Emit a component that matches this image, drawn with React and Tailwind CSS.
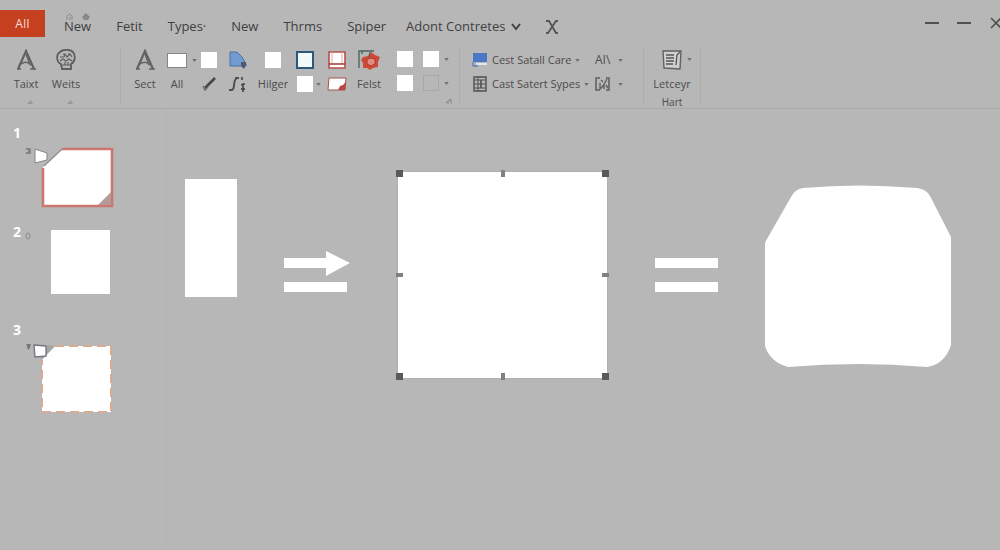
import React, { useState } from 'react';

const tabs = ['New', 'Fetit', 'Types·', 'New', 'Thrms', 'Spiper'];

const Caret = ({ className = '' }) => (
  <svg viewBox="0 0 6 4" className={`w-[5px] h-[3px] text-[#707070] ${className}`} aria-hidden="true">
    <path d="M0 0h6L3 4z" fill="currentColor" />
  </svg>
);

const LetterIcon = () => (
  <svg viewBox="0 0 20 22" className="w-5 h-[22px]" fill="none" stroke="#626262" aria-hidden="true">
    <path d="M2 20L10 2l8 18" strokeWidth="2.2" />
    <path d="M5 15c4-3 7-2 10 1M10 5l4 11M1 20h4M14 20l6 0" strokeWidth="1.4" />
  </svg>
);

const StampIcon = () => (
  <svg viewBox="0 0 20 22" className="w-5 h-[22px]" fill="none" stroke="#5e5e5e" aria-hidden="true">
    <path d="M5 15C0 13 0 5 4 3c3-3 10-3 13 0 3 4 2 10-2 12v5H6z" strokeWidth="1.8" />
    <path d="M4 8h4l1-3 2 3 3-3 2 3M4 12l3-2 3 2 3-2 3 2M6 16h8M9 13v3M12 13v3M7 5l2 1M12 5h2" strokeWidth="1.2" />
  </svg>
);

const Swatch = ({ label, className = 'bg-white' }) => (
  <button aria-label={label} className={`w-4 h-4 ${className}`} />
);

// One ribbon column: a tool on top, a second tool or a label below it
const Column = ({ top, bottom, className = 'w-8 items-center', marker = false }) => (
  <div className={`relative flex flex-col shrink-0 ${className}`}>
    <div className="h-6 flex items-center">{top}</div>
    <div className="h-6 flex items-center">{bottom}</div>
    {marker && (
      <svg viewBox="0 0 6 4" className="mt-1 ml-2 w-[6px] h-1" aria-hidden="true">
        <path d="M0 4l4-4 2 4z" fill="#989898" />
      </svg>
    )}
  </div>
);

const Divider = () => <div className="w-px h-14 shrink-0 bg-[#acacac]" />;

const Ribbon = () => (
  <div className="h-16 pt-[3px] flex items-start text-[11px] leading-4 font-medium text-[#4c4c4c] border-b border-[#a9a9a9] whitespace-nowrap">
    {/* Text */}
    <div className="w-[120px] shrink-0 pl-[6px] flex">
      <Column marker className="w-10 items-center" top={<button aria-label="Text tool"><LetterIcon /></button>} bottom="Taixt" />
      <Column marker className="w-10 items-center" top={<button aria-label="Stamp tool"><StampIcon /></button>} bottom="Weits" />
    </div>
    <Divider />

    {/* Shapes */}
    <div className="w-[338px] shrink-0 pl-2 flex">
      <Column top={<button aria-label="Select"><LetterIcon /></button>} bottom="Sect" />
      <Column
        top={
          <>
            <button aria-label="Rectangle" className="w-5 h-[15px] bg-white border border-[#858585]" />
            <Caret className="absolute -right-1" />
          </>
        }
        bottom="All"
      />
      <Column
        top={<Swatch label="Square" />}
        bottom={
          <button aria-label="Pen">
            <svg viewBox="0 0 16 16" className="w-4 h-4" fill="none" aria-hidden="true">
              <path d="M4 12L14 2" stroke="#484848" strokeWidth="2.6" />
              <path d="M2 10l2 4 3-3" stroke="#6a6a6a" strokeWidth="1.4" />
            </svg>
          </button>
        }
      />
      <Column
        className="w-8 items-start pl-1"
        top={
          <button aria-label="Fill shape">
            <svg viewBox="0 0 18 18" className="w-[18px] h-[18px]" aria-hidden="true">
              <path d="M1 1h7l5 5 4 7v2H1z" fill="#6f9bd0" stroke="#4c719e" />
              <path d="M12 11h5v3l-2 4-3-3z" fill="#4b5b70" />
            </svg>
          </button>
        }
        bottom={
          <button aria-label="Curve">
            <svg viewBox="0 0 18 18" className="w-[18px] h-[18px]" fill="none" stroke="#505050" aria-hidden="true">
              <path d="M0 15h3c4-2 0-9 5-12" strokeWidth="2" />
              <path d="M6 3h4M13 2v3M14 8v9M12 10l4-1M12 14h4" strokeWidth="1.8" />
            </svg>
          </button>
        }
      />
      <Column top={<Swatch label="Light fill" />} bottom="Hilger" />
      <Column
        top={<button aria-label="Outline" className="w-[18px] h-[18px] bg-[#f2f9fd] border-2 border-[#2d587c]" />}
        bottom={
          <>
            <Swatch label="Plain" />
            <Caret className="absolute right-0" />
          </>
        }
      />
      <Column
        top={
          <button aria-label="Page">
            <svg viewBox="0 0 18 18" className="w-[18px] h-[18px]" aria-hidden="true">
              <path d="M1 1h16v16H1z" fill="#fff" stroke="#b8504b" strokeWidth="1.6" />
              <path d="M4 1v12M14 1v12" fill="none" stroke="#dfaaa6" />
              <path d="M1 13h16" stroke="#a8433e" strokeWidth="1.6" />
            </svg>
          </button>
        }
        bottom={
          <button aria-label="Folded page">
            <svg viewBox="0 0 20 14" className="w-5 h-[14px]" aria-hidden="true">
              <path d="M2 1h17l-1 12H1z" fill="#fff" stroke="#a6534e" />
              <path d="M19 4c-3 5-3 4-6 5l-2 4h7z" fill="#b9463f" />
            </svg>
          </button>
        }
      />
      <Column
        top={
          <button aria-label="Flower">
            <svg viewBox="0 0 22 22" className="w-[22px] h-[22px]" aria-hidden="true">
              <path d="M1 19V2h15M1 2h3v3" fill="none" stroke="#4c6662" strokeWidth="1.4" />
              <path d="M5 8l5-1 3-4 4 3 5 2-2 5v5l-5 1-3 2-3-2H5v-5l-2-3z" fill="#cf4a38" />
              <path d="M9 10l4-1 4 1v5l-4 2-4-2z" fill="#df8f82" stroke="#a9372c" />
              <path d="M11 8l1-5" stroke="#4c5a58" />
            </svg>
          </button>
        }
        bottom="Felst"
      />
      <div className="relative ml-3 w-[60px] h-12 flex items-start">
        <div className="grid grid-cols-2 gap-x-[10px] gap-y-2 pt-[3px]">
          <Swatch label="Style 1" />
          <Swatch label="Style 2" />
          <Swatch label="Style 3" />
          <Swatch label="Style 4" className="border border-[#a8a8a8]" />
        </div>
        <Caret className="absolute right-2 top-[10px]" />
        <Caret className="absolute right-2 top-[34px]" />
        <svg viewBox="0 0 8 8" className="absolute right-1 top-[49px] w-2 h-2" fill="none" stroke="#858585" aria-hidden="true">
          <path d="M1 6l4-4M3 7V4l3-2v4h1" />
        </svg>
      </div>
    </div>
    <Divider />

    {/* Cells */}
    <div className="w-[183px] shrink-0 pl-3 flex">
      <Column
        className="w-[123px]"
        top={
          <button className="flex items-center gap-1">
            <svg viewBox="0 0 16 14" className="w-4 h-[14px]" aria-hidden="true">
              <path d="M1 0h14v9H1z" fill="#4a78c4" />
              <path d="M1 10h14v2H1z" fill="#dfe6f2" />
              <path d="M1 9v4h5M2 11h2" fill="none" stroke="#4567a0" />
            </svg>
            <span>Cest Satall Care</span>
            <Caret />
          </button>
        }
        bottom={
          <button className="flex items-center gap-1">
            <svg viewBox="0 0 16 16" className="w-4 h-4" fill="none" stroke="#505050" aria-hidden="true">
              <path d="M2 1h12v14H2z" strokeWidth="1.4" />
              <path d="M6 1v14M2 4h12M2 8h12M2 12h12" />
              <path d="M9 4v8" strokeWidth="1.6" />
            </svg>
            <span>Cast Satert Sypes</span>
            <Caret />
          </button>
        }
      />
      <Column
        className="w-8"
        top={<button className="w-7 flex items-center justify-between text-xs">AI\ <Caret /></button>}
        bottom={
          <button aria-label="Chart" className="w-7 flex items-center justify-between">
            <svg viewBox="0 0 16 16" className="w-4 h-4" fill="none" stroke="#616161" aria-hidden="true">
              <path d="M5 2H1v12h4M11 14h3V2h-3" strokeWidth="1.6" />
              <path d="M5 7v6l3-3 4-7M9 8v5M6 4l2 2M11 9l2 3" strokeWidth="1.4" />
            </svg>
            <Caret />
          </button>
        }
      />
    </div>
    <Divider />

    <div className="relative w-14 shrink-0 flex flex-col items-center">
      <button className="flex flex-col items-center">
        <span className="h-6 flex items-center">
          <svg viewBox="0 0 20 20" className="w-5 h-5" aria-hidden="true">
            <path d="M1 1h18l-1 18-16-1z" fill="#d0d0d0" stroke="#606060" strokeWidth="1.4" />
            <path d="M4 5h8M4 8h8M4 11h8M4 14h7M14 15l1-10 3-3" fill="none" stroke="#555555" strokeWidth="1.3" />
          </svg>
        </span>
        <span className="h-6 flex items-center">Letceyr</span>
      </button>
      <Caret className="absolute right-2 top-[10px]" />
      <span className="text-[10px] leading-3">Hart</span>
    </div>
    <Divider />
  </div>
);

const TitleBar = ({ active, onSelect }) => (
  <div className="h-[45px] pt-[10px] flex items-start overflow-hidden whitespace-nowrap">
    <button className="w-[45px] h-[27px] shrink-0 bg-[#c5401f] text-xs text-[#f6ddd5]">AII</button>
    <nav className="h-[34px] ml-[19px] flex items-center gap-5 text-[13px] font-medium text-[#404040]">
      <div className="flex gap-[25px]">
        {tabs.map((tab, i) => (
          <button key={i} onClick={() => onSelect(i)} aria-current={active === i} className="relative">
            {tab}
            {i === 0 && (
              <svg viewBox="0 0 26 8" className="absolute left-0 -top-1 w-[26px] h-2" aria-hidden="true">
                <path d="M3 7V3l3-2 2 2v4M6 7V4" fill="none" stroke="#8a8a8a" />
                <path d="M22 0l4 4-2 3h-4l-2-3z" fill="#888888" />
              </svg>
            )}
          </button>
        ))}
      </div>
      <button className="flex items-center gap-[6px]">
        Adont Contretes
        <svg viewBox="0 0 10 8" className="w-[10px] h-2" aria-hidden="true">
          <path d="M1 1l4 5 4-5" fill="none" stroke="#404040" strokeWidth="2" />
        </svg>
      </button>
      <button aria-label="Close tab" className="ml-1">
        <svg viewBox="0 0 14 14" className="w-[14px] h-[14px]" fill="none" stroke="#555555" aria-hidden="true">
          <path d="M1 1h3l7 12h2M13 1h-2L3 13H1" strokeWidth="1.8" />
        </svg>
      </button>
    </nav>
    <div className="ml-auto -mr-3 flex text-[#505050]">
      <button aria-label="Minimize" className="w-8 h-[26px] flex items-center justify-center">
        <span className="w-[14px] h-0.5 bg-[#505050]" />
      </button>
      <button aria-label="Restore" className="w-8 h-[26px] flex items-center justify-center">
        <span className="w-[14px] h-0.5 bg-[#505050]" />
      </button>
      <button aria-label="Close" className="w-8 h-[26px] flex items-center justify-center">
        <svg viewBox="0 0 12 12" className="w-3 h-3" aria-hidden="true">
          <path d="M1 1l10 10M11 1L1 11" stroke="currentColor" strokeWidth="1.6" />
        </svg>
      </button>
    </div>
  </div>
);

const SlideList = () => (
  <aside className="w-[167px] shrink-0 pt-4 border-r border-[#b3b3b3]">
    <ol className="text-sm leading-4 font-bold text-white">
      <li className="h-[99px] pl-[13px] flex items-start">
        <span className="w-3">1</span>
        <button aria-label="Slide 1" className="pt-[22px]">
          <svg viewBox="25 147 90 62" className="w-[90px] h-[62px]" aria-hidden="true">
            <path d="M63 149h49v57H43v-39z" fill="#fff" />
            <path d="M62 149h50v57H43v-38" fill="none" stroke="#cb7770" strokeWidth="2.6" />
            <path d="M44 166l18-17" stroke="#8f8f94" strokeWidth="1.2" />
            <path d="M98 205l13-13v13z" fill="#b49a98" />
            <path d="M35 149l12 4v7l-12 3z" fill="#fff" stroke="#85858a" />
            <path d="M26 149h4v4h-4M28 151h2" fill="none" stroke="#777777" strokeWidth="1.4" />
          </svg>
        </button>
      </li>
      <li className="h-[98px] pl-[13px] flex items-start">
        <span className="w-3">2</span>
        <svg viewBox="0 0 6 8" className="mt-2 w-[6px] h-2" aria-hidden="true">
          <ellipse cx="3" cy="4" rx="2" ry="3" fill="none" stroke="#8c8c8c" />
        </svg>
        <button aria-label="Slide 2" className="mt-[6px] ml-5 w-[59px] h-16 bg-white" />
      </li>
      <li className="pl-[13px] flex items-start">
        <span className="w-3">3</span>
        <button aria-label="Slide 3" className="pt-[22px]">
          <svg viewBox="25 344 90 70" className="w-[90px] h-[70px]" aria-hidden="true">
            <path d="M55 346h56v66H42v-52z" fill="#fff" />
            <path d="M55 346h56v66H42v-52" fill="none" stroke="#d9ab94" strokeWidth="2" strokeDasharray="9 5" />
            <path d="M41 360l14-14-7-1-7 8z" fill="#a5a5a8" />
            <path d="M34 345l12 1v10l-11 1z" fill="#fff" stroke="#77777f" strokeWidth="1.4" />
            <path d="M26 343h5l-1 5-2 2z" fill="#777777" />
          </svg>
        </button>
      </li>
    </ol>
  </aside>
);

const Canvas = () => (
  <main className="flex-1 pt-[62px] pl-[18px] pr-[49px]">
    <div className="flex items-center justify-between">
      <div className="w-[52px] h-[118px] mt-2 shrink-0 self-start bg-white" />

      <svg viewBox="0 0 66 48" className="w-[66px] h-12 shrink-0" fill="#fff" aria-hidden="true">
        <path d="M0 7h42V0l24 12-24 13v-8H0zM0 31h63v10H0z" />
      </svg>

      {/* Selected square with its resize handles */}
      <div className="relative w-[211px] h-[208px] shrink-0 bg-white border border-[#b0b0b0]">
        <span className="absolute -left-0.5 -top-0.5 w-[7px] h-[7px] bg-[#5a5a5a]" />
        <span className="absolute -right-0.5 -top-0.5 w-[7px] h-[7px] bg-[#5a5a5a]" />
        <span className="absolute -left-0.5 -bottom-0.5 w-[7px] h-[7px] bg-[#5a5a5a]" />
        <span className="absolute -right-0.5 -bottom-0.5 w-[7px] h-[7px] bg-[#5a5a5a]" />
        <span className="absolute inset-x-0 mx-auto -top-0.5 w-1 h-[7px] bg-[#808080]" />
        <span className="absolute inset-x-0 mx-auto -bottom-0.5 w-1 h-[7px] bg-[#808080]" />
        <span className="absolute inset-y-0 my-auto -left-0.5 w-[7px] h-1 bg-[#808080]" />
        <span className="absolute inset-y-0 my-auto -right-0.5 w-[7px] h-1 bg-[#808080]" />
      </div>

      <div className="w-[63px] shrink-0 flex flex-col gap-[14px]">
        <div className="h-[10px] bg-white" />
        <div className="h-[10px] bg-white" />
      </div>

      <svg viewBox="764 183 186 184" className="w-[186px] h-[184px] shrink-0" fill="#fff" aria-hidden="true">
        <path d="M764 244Q764 242 766 239L790 197Q794 189 802 188Q857 183 916 188Q925 189 929 196L950 237V345Q944 364 926 367Q857 361 787 367Q769 362 764 346Z" />
      </svg>
    </div>
  </main>
);

const App = () => {
  const [active, setActive] = useState(0);

  return (
    <div className="min-h-screen flex flex-col bg-[#b7b7b7] font-['Open_Sans','Noto_Sans',sans-serif] overflow-hidden">
      <header>
        <TitleBar active={active} onSelect={setActive} />
        <Ribbon />
      </header>
      <div className="flex-1 flex">
        <SlideList />
        <Canvas />
      </div>
    </div>
  );
};

export default App;
